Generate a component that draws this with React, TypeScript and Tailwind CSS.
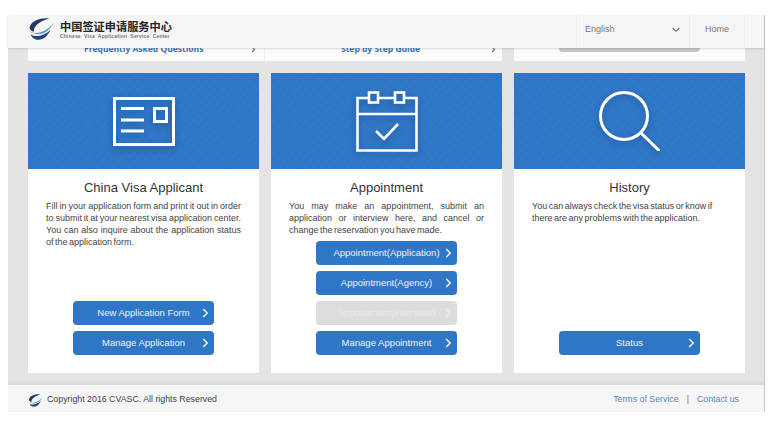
const LOGO_FONT = 'font-["Noto_Sans_CJK_SC",serif]'

function Logo({ className }: { className: string }) {
  return (
    <svg className={className} viewBox="0 0 26 22" aria-hidden="true">
      <path d="M21 .5C13-.5 4.500 2.500 2 8c-1.200 2.800.5 4.800 4 5.800C5 9.500 10 3.500 21 .5z" fill="#1f3a68" />
      <path d="M0 11.500c3.500 5 14.500 6 26-6.500-5.500 8-9 10.500-14 11C7 16.500 2 14.500 0 11.500z" fill="#5b97cf" />
      <path d="M2.500 16.500c6 3 13 1.500 20-4.500-3 6-7 9.800-12 9.800-3.800 0-6.800-2.300-8-5.300z" fill="#25436f" />
    </svg>
  )
}

function Chevron({ className }: { className?: string }) {
  return (
    <svg className={className} width="7" height="10" viewBox="0 0 7 10" fill="none" stroke="currentColor" strokeWidth="1.600">
      <path d="M1.200 1l4 4-4 4" />
    </svg>
  )
}

function ActionButton({ label, disabled }: { label: string; disabled?: boolean }) {
  return (
    <div
      className={`grid h-6 w-[141px] grid-cols-[16px_1fr_16px] items-center rounded-sm text-[9.500px] ${
        disabled ? 'bg-[#dcdcdc] text-[#e9e9e9]' : 'bg-[#2f76c6] text-[#eef4fb]'
      }`}
    >
      <span />
      <span className="text-center whitespace-nowrap">{label}</span>
      <Chevron className="ml-[4px]" />
    </div>
  )
}

function Banner({ children }: { children: React.ReactNode }) {
  return (
    <div className="relative flex h-[96px] items-center justify-center overflow-hidden bg-[#2f76c6]">
      <svg className="absolute inset-0 h-full w-full" aria-hidden="true">
        <defs>
          <pattern id="weave" width="24" height="24" patternUnits="userSpaceOnUse" patternTransform="rotate(45)">
            <path d="M0 6h12M0 12h12M0 18h12M0 24h12M18 0v12M12 0v12M24 0v12M12 18h12M12 24h12M6 12v12" fill="none" stroke="#337aca" strokeWidth="1.200" />
          </pattern>
        </defs>
        <rect width="100%" height="100%" fill="url(#weave)" />
      </svg>
      <div className="relative drop-shadow-[0_3px_3px_rgba(20,60,110,0.45)]">{children}</div>
    </div>
  )
}

function CardIcon() {
  return (
    <svg width="62" height="49" viewBox="0 0 62 49" fill="none" stroke="#fff" strokeWidth="3">
      <rect x="1.500" y="1.500" width="59" height="46" />
      <path d="M8 11.500h23M8 23h23M8 34h23" />
      <rect x="41.500" y="11.500" width="12" height="13" />
    </svg>
  )
}

function CalendarIcon() {
  return (
    <svg width="62" height="61" viewBox="0 0 62 61" fill="none" stroke="#fff" strokeWidth="2.600">
      <path d="M13 7H1.500v52.500h59V7H48M22 7h17" />
      <rect x="13" y="1.500" width="9" height="10" />
      <rect x="39" y="1.500" width="9" height="10" />
      <path d="M1.500 23h59" />
      <path d="M20 40l8 8 14-15" />
    </svg>
  )
}

function SearchIcon() {
  return (
    <svg width="61" height="60" viewBox="0 0 61 60" fill="none" stroke="#fff" strokeWidth="3" strokeLinecap="round">
      <circle cx="25" cy="25" r="23.500" />
      <path d="M42 42l17.500 17" />
    </svg>
  )
}

function ServiceCard({
  icon,
  title,
  text,
  actions,
  justifyText,
}: {
  icon: React.ReactNode
  title: string
  text: string
  actions: React.ReactNode
  justifyText?: boolean
}) {
  return (
    <div className="flex w-[231px] flex-col">
      <Banner>{icon}</Banner>
      <div className="flex h-[204px] flex-col bg-white px-[18px] pt-[10px] pb-[18px]">
        <h2 className="text-center text-[13px] leading-[18px] text-[#333]">{title}</h2>
        <p className={`mt-[3px] text-[9px] leading-[12px] [word-spacing:-1px] text-[#444] ${justifyText ? 'text-justify' : ''}`}>{text}</p>
        <div className="mt-auto flex flex-col items-center gap-[6px]">{actions}</div>
      </div>
    </div>
  )
}

export default function App() {
  return (
    <div className="h-[433px] w-[772px] bg-white pt-[15px] pl-2 font-['Liberation_Sans',sans-serif]">
      <div className="w-[757px] border-r border-[#c9c9c9]">
        {/* Cabecera fija */}
        <header className="relative z-10 flex h-[33px] bg-[#f5f5f5] shadow-[0_1px_2px_rgba(0,0,0,0.15)]">
          <div className="flex flex-1 items-center pb-[5px] pl-5">
            <Logo className="h-[22px] w-[26px]" />
            <div className="ml-[6px] flex w-[114px] flex-col">
              <span className={`${LOGO_FONT} text-[11.200px] leading-[14px] font-bold text-[#222]`}>中国签证申请服务中心</span>
              <span className="text-[5px] leading-[7px] font-bold tracking-[0.200px] [word-spacing:1.500px] text-[#777]">
                Chinese Visa Application Service Center
              </span>
            </div>
          </div>
          <div className="flex w-[114px] items-center justify-between border-x border-[#ececec] pr-[9px] pb-[4px] pl-2 text-[9px] text-[#777]">
            <span>English</span>
            <svg width="8" height="6" viewBox="0 0 8 6" fill="none" stroke="#666" strokeWidth="1.100">
              <path d="M.7 1l3.300 3.300L7.300 1" />
            </svg>
          </div>
          <div className="flex w-[55px] items-center justify-center border-r border-[#ececec] pb-[4px] text-[9px] text-[#777]">Home</div>
          <div className="w-[19px]" />
        </header>

        <main className="bg-[#e4e4e4] pr-[19px] pb-[7px] pl-5">
          {/* Tira superior, cortada por la cabecera */}
          <div className="-mt-[12px] flex h-[25px] items-end gap-3">
            <div className="flex h-full w-[474px] bg-[#fbfbfb] font-['Open_Sans',sans-serif] text-[8.500px] font-bold text-[#3f74b5]">
              <div className="flex w-[237px] items-center border-r border-[#efefef] pr-2 pl-[56px]">
                <span className="mt-[2px] flex-1">Frequently Asked Questions</span>
                <Chevron className="mt-[2px] h-[7px] w-[5px] text-[#777]" />
              </div>
              <div className="flex w-[237px] items-center pr-[6px] pl-[76px]">
                <span className="mt-[2px] flex-1">Step by Step Guide</span>
                <Chevron className="mt-[2px] h-[7px] w-[5px] text-[#777]" />
              </div>
            </div>
            <div className="flex h-full w-[231px] justify-center bg-[#fbfbfb]">
              <div className="h-4 w-[141px] rounded-sm bg-[#c6c6c6]" />
            </div>
          </div>

          <div className="mt-3 flex gap-3">
            <ServiceCard
              icon={<CardIcon />}
              title="China Visa Applicant"
              text="Fill in your application form and print it out in order to submit it at your nearest visa application center. You can also inquire about the application status of&nbsp;the application form."
              actions={
                <>
                  <ActionButton label="New Application Form" />
                  <ActionButton label="Manage Application" />
                </>
              }
              justifyText
            />
            <ServiceCard
              icon={<CalendarIcon />}
              title="Appointment"
              text="You may make an appointment, submit an application or interview here, and cancel or change the reservation you have made."
              actions={
                <>
                  <ActionButton label="Appointment(Application)" />
                  <ActionButton label="Appointment(Agency)" />
                  <ActionButton label="Appointment(Interview)" disabled />
                  <ActionButton label="Manage Appointment" />
                </>
              }
              justifyText
            />
            <ServiceCard
              icon={<SearchIcon />}
              title="History"
              text="You can always check the visa status or know if there are any problems with the application."
              actions={<ActionButton label="Status" />}
            />
          </div>
        </main>

        <div className="h-[5px] bg-gradient-to-b from-[#e4e4e4] to-[#d6d6d6]" />

        <footer className="flex h-[27px] items-center bg-[#f5f5f5] pt-[3px] pr-[25px] pl-5 text-[8.800px]">
          <Logo className="h-[13px] w-[15px]" />
          <span className="ml-[4px] flex-1 text-[#444]">Copyright 2016 CVASC. All rights Reserved</span>
          <span className="text-[#5c86b8]">Terms of Service</span>
          <span className="mx-[8px] text-[#7a6a5a]">|</span>
          <span className="text-[#5c86b8]">Contact us</span>
        </footer>
      </div>
    </div>
  )
}
